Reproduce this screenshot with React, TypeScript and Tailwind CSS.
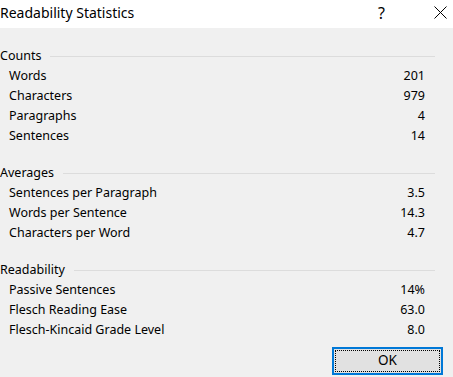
import React from "react";

const sections: { title: string; rows: [string, string][] }[] = [
  {
    title: "Counts",
    rows: [
      ["Words", "201"],
      ["Characters", "979"],
      ["Paragraphs", "4"],
      ["Sentences", "14"],
    ],
  },
  {
    title: "Averages",
    rows: [
      ["Sentences per Paragraph", "3.5"],
      ["Words per Sentence", "14.3"],
      ["Characters per Word", "4.7"],
    ],
  },
  {
    title: "Readability",
    rows: [
      ["Passive Sentences", "14%"],
      ["Flesch Reading Ease", "63.0"],
      ["Flesch-Kincaid Grade Level", "8.0"],
    ],
  },
];

export default function App() {
  return (
    <div
      className="w-[453px] h-[377px] bg-[#f0f0f0] text-black overflow-hidden flex flex-col"
      style={{ fontFamily: '"Noto Sans", "Open Sans", sans-serif' }}
    >
      <div className="h-[28px] bg-white flex items-center shrink-0">
        <div className="text-[14px] leading-none flex-1 -mt-[2px]">Readability Statistics</div>
        <div className="text-[16px] leading-none w-[12px] mr-[44px] -mt-[2px]">?</div>
        <svg width="13" height="13" viewBox="0 0 13 13" className="mr-[6px] -mt-[3px]">
          <path d="M0.5 0.5 L12.5 12.5 M12.5 0.5 L0.5 12.5" stroke="#000" strokeWidth="1" />
        </svg>
      </div>
      <div className="flex flex-col pt-[18px] gap-[17px] text-[12.5px]">
        {sections.map((s) => (
          <div key={s.title} className="flex flex-col">
            <div className="h-[20px] flex items-center pr-[18px]">
              <span className="leading-none">{s.title}</span>
              <div className="flex-1 h-px bg-[#dcdcdc] ml-[9px]" />
            </div>
            {s.rows.map(([k, v]) => (
              <div key={k} className="h-[20px] flex items-center pl-[9px] pr-[28px]">
                <span className="flex-1 leading-none">{k}</span>
                <span className="leading-none">{v}</span>
              </div>
            ))}
          </div>
        ))}
      </div>
      <div className="flex justify-end pr-[10px] mt-[7px]">
        <div className="w-[111px] h-[28px] border-2 border-[#0078d7] bg-[#e1e1e1] p-[1px]">
          <div className="w-full h-full border border-dotted border-black flex items-center justify-center text-[13.5px] leading-none">
            OK
          </div>
        </div>
      </div>
    </div>
  );
}
